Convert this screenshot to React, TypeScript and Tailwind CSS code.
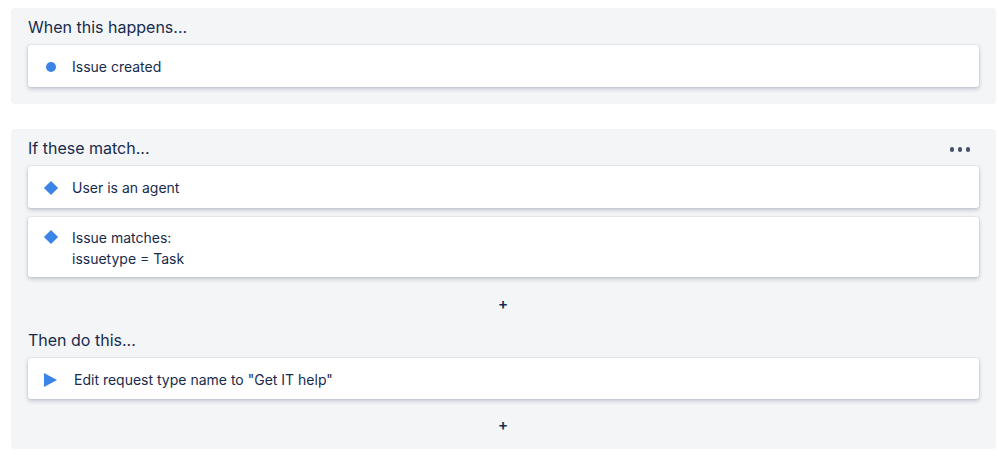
import { ReactNode } from "react";

type IconKind = "dot" | "diamond" | "play";

function RuleIcon({ kind }: { kind: IconKind }) {
  if (kind === "dot") {
    return <span className="block w-[10px] h-[10px] rounded-full bg-[#3a84e8]" />;
  }
  if (kind === "diamond") {
    return <span className="block w-[10px] h-[10px] rotate-45 bg-[#3a84e8]" />;
  }
  return (
    <svg width="13" height="14" viewBox="0 0 13 14" className="block">
      <path d="M0 0 L13 7 L0 14 Z" fill="#3a84e8" />
    </svg>
  );
}

function RuleCard({
  kind,
  children,
  pad = "pt-[12px] pb-[10px]",
  leading = "leading-[20px]",
}: {
  kind: IconKind;
  children: ReactNode;
  pad?: string;
  leading?: string;
}) {
  return (
    <div
      className={`flex items-start bg-white rounded-[2px] shadow-[0_2px_4px_rgba(9,30,66,0.22),0_0_1px_rgba(9,30,66,0.35)] pr-4 ${pad}`}
    >
      <div className="w-[44px] h-[20px] flex items-center justify-center shrink-0 pl-[1px]">
        <RuleIcon kind={kind} />
      </div>
      <div className={`text-[14px] text-[#172b4d] ${leading} ${kind === "play" ? "pl-[2px]" : ""}`}>
        {children}
      </div>
    </div>
  );
}

function Heading({ children, more }: { children: ReactNode; more?: boolean }) {
  return (
    <div className="flex items-center justify-between h-[24px] mb-[6px]">
      <h2 className="text-[16px] leading-[24px] text-[#172b4d]">{children}</h2>
      {more && (
        <div className="flex items-center gap-[3.5px] mr-[9px] mt-[3px]">
          <span className="w-[4.5px] h-[4.5px] rounded-full bg-[#42526e]" />
          <span className="w-[4.5px] h-[4.5px] rounded-full bg-[#42526e]" />
          <span className="w-[4.5px] h-[4.5px] rounded-full bg-[#42526e]" />
        </div>
      )}
    </div>
  );
}

function AddRow() {
  return (
    <div className="flex justify-center h-[24px] items-center">
      <span className="text-[15px] leading-none font-semibold text-[#172b4d] pr-[1px]">+</span>
    </div>
  );
}

export default function App() {
  return (
    <div
      className="w-[999px] h-[456px] bg-white pt-[8px] pl-[11px] pr-[3px]"
      style={{ fontFamily: "Inter, 'Noto Sans', sans-serif" }}
    >
      {/* Trigger */}
      <section className="bg-[#f4f5f7] rounded-[4px] pt-[7px] pb-[17px] px-[17px]">
        <Heading>When this happens...</Heading>
        <RuleCard kind="dot">Issue created</RuleCard>
      </section>

      {/* Conditions + actions */}
      <section className="bg-[#f4f5f7] rounded-[4px] mt-[25px] pt-[7px] pb-[13px] px-[17px]">
        <Heading more>If these match...</Heading>
        <div className="flex flex-col gap-[9px]">
          <RuleCard kind="diamond">User is an agent</RuleCard>
          <RuleCard kind="diamond" pad="pt-[10px] pb-[8px]" leading="leading-[21px]">
            Issue matches:
            <br />
            issuetype = Task
          </RuleCard>
        </div>
        <div className="mt-[14px]">
          <AddRow />
        </div>
        <div className="mt-[13px]">
          <Heading>Then do this...</Heading>
        </div>
        <RuleCard kind="play" pad="pt-[12px] pb-[9px]">
          Edit request type name to "Get IT help"
        </RuleCard>
        <div className="mt-[13px]">
          <AddRow />
        </div>
      </section>
    </div>
  );
}
